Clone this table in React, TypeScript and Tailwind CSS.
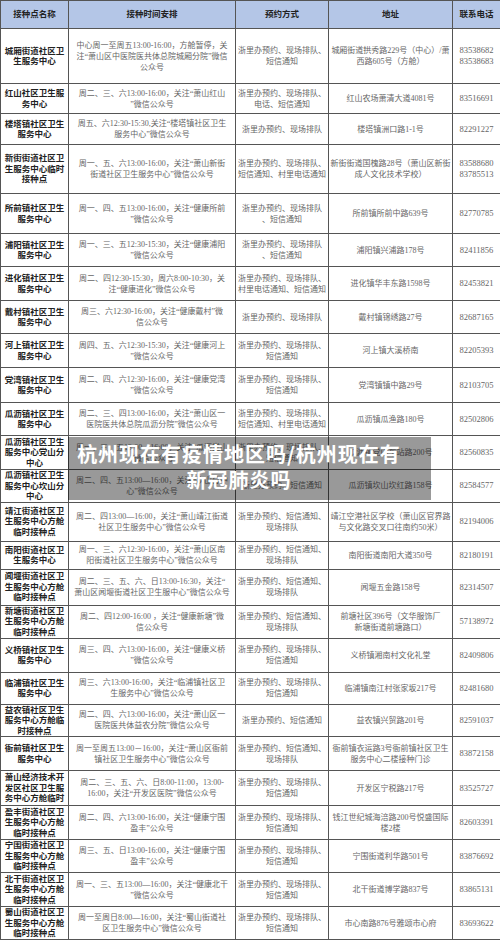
import React from 'react';

type Row = {
  h: string;
  name: string[];
  time: string[];
  method: string[];
  addr: string[];
  phone: string[];
};

const rows: Row[] = [
  {
    h: 'h-[55px]',
    name: ['城厢街道社区卫', '生服务中心'],
    time: ['中心周一至周五13:00-16:00，方舱暂停，关', '注“萧山区中医院医共体总院城厢分院”微信', '公众号'],
    method: ['浙里办预约、现场排队、', '短信通知'],
    addr: ['城厢街道拱秀路229号（中心）/萧', '西路605号（方舱）'],
    phone: ['83538682', '83538683'],
  },
  {
    h: 'h-[30px]',
    name: ['红山社区卫生服', '务中心'],
    time: ['周二、三、六13:00-16:00，关注“萧山红山', '”微信公众号'],
    method: ['浙里办预约、现场排队、', '电话、短信通知'],
    addr: ['红山农场萧清大道4081号'],
    phone: ['83516691'],
  },
  {
    h: 'h-[31px]',
    name: ['楼塔镇社区卫生', '服务中心'],
    time: ['周五、六12:30-15:30,关注“楼塔镇社区卫生', '服务中心”微信公众号'],
    method: ['浙里办预约、现场排队'],
    addr: ['楼塔镇洲口路1-1号'],
    phone: ['82291227'],
  },
  {
    h: 'h-[49px]',
    name: ['新街街道社区卫', '生服务中心临时', '接种点'],
    time: ['周一、五、六13:00-16:00，关注“萧山新街', '街道社区卫生服务中心”微信公众号'],
    method: ['浙里办预约、现场排队、', '短信通知、村里电话通知'],
    addr: ['新街街道国槐路28号（萧山区新街', '成人文化技术学校）'],
    phone: ['83588680', '83785513'],
  },
  {
    h: 'h-[40px]',
    name: ['所前镇社区卫生', '服务中心'],
    time: ['周一、四、五13:00-16:00，关注“健康所前', '”微信公众号'],
    method: ['浙里办预约、现场排队', '、短信通知'],
    addr: ['所前镇所前中路639号'],
    phone: ['82770785'],
  },
  {
    h: 'h-[33px]',
    name: ['浦阳镇社区卫生', '服务中心'],
    time: ['周一、三、五12:30-15:30，关注“健康浦阳', '”微信公众号'],
    method: ['浙里办预约、现场排队', '、短信通知'],
    addr: ['浦阳镇兴浦路178号'],
    phone: ['82411856'],
  },
  {
    h: 'h-[34px]',
    name: ['进化镇社区卫生', '服务中心'],
    time: ['周二、四12:30-15:30，周六8:00-10:30，关', '注“健康进化”微信公众号'],
    method: ['浙里办预约、现场排队、', '村里电话通知、短信通知'],
    addr: ['进化镇华丰东路1598号'],
    phone: ['82453821'],
  },
  {
    h: 'h-[33px]',
    name: ['戴村镇社区卫生', '服务中心'],
    time: ['周三、六12:30-16:00，关注“健康戴村”微', '信公众号'],
    method: ['浙里办预约、现场排队'],
    addr: ['戴村镇锦绣路27号'],
    phone: ['82687165'],
  },
  {
    h: 'h-[34px]',
    name: ['河上镇社区卫生', '服务中心'],
    time: ['周四、五、六12:30-15:30，关注“健康河上', '”微信公众号'],
    method: ['浙里办预约、现场排队、', '短信通知'],
    addr: ['河上镇大溪桥南'],
    phone: ['82205393'],
  },
  {
    h: 'h-[35px]',
    name: ['党湾镇社区卫生', '服务中心'],
    time: ['周二、四、六12:30-16:00，关注“健康党湾', '”微信公众号'],
    method: ['浙里办预约、现场排队、', '短信通知'],
    addr: ['党湾镇镇中路29号'],
    phone: ['82103705'],
  },
  {
    h: 'h-[33px]',
    name: ['瓜沥镇社区卫生', '服务中心'],
    time: ['周二、三、四13:00-16:00，关注“萧山区一', '医院医共体总院瓜沥分院”微信公众号'],
    method: ['浙里办预约、现场排队、', '短信通知、村里电话通知'],
    addr: ['瓜沥镇瓜渔路180号'],
    phone: ['82502806'],
  },
  {
    h: 'h-[34px]',
    name: ['瓜沥镇社区卫生', '服务中心党山分', '中心'],
    time: ['周一、三、五13:00—16:00，关注“瓜沥党山', '”微信公众号'],
    method: ['浙里办预约、现场排队、', '短信通知'],
    addr: ['瓜沥镇党山车站路200号'],
    phone: ['82560835'],
  },
  {
    h: 'h-[32px]',
    name: ['瓜沥镇社区卫生', '服务中心坎山分', '中心'],
    time: ['周二、四、五13:00—16:00，关注“坎山分中', '心”微信公众号'],
    method: ['浙里办预约、短信通知'],
    addr: ['瓜沥镇坎山坎红路158号'],
    phone: ['82584577'],
  },
  {
    h: 'h-[39px]',
    name: ['靖江街道社区卫', '生服务中心方舱', '临时接种点'],
    time: ['周二、四13:00—16:00，关注“萧山靖江街道', '社区卫生服务中心”微信公众号'],
    method: ['浙里办预约、短信通知、', '现场排队'],
    addr: ['靖江空港社区学校（萧山区官界路', '与文化路交叉口往南约50米）'],
    phone: ['82194006'],
  },
  {
    h: 'h-[28px]',
    name: ['南阳街道社区卫', '生服务中心'],
    time: ['周一、三、六12:30-16:00，关注“萧山区南', '阳街道社区卫生服务中心”微信公众号'],
    method: ['浙里办预约、短信通知、', '现场排队'],
    addr: ['南阳街道南阳大道350号'],
    phone: ['82180191'],
  },
  {
    h: 'h-[36px]',
    name: ['闻堰街道社区卫', '生服务中心方舱', '临时接种点'],
    time: ['周二、三、五、六、日13:00-16:30，关注“', '萧山区闻堰街道社区卫生服中心”微信公众号'],
    method: ['浙里办预约、短信通知、', '现场排队'],
    addr: ['闻堰五金路158号'],
    phone: ['82314507'],
  },
  {
    h: 'h-[33px]',
    name: ['新塘街道社区卫', '生服务中心方舱', '临时接种点'],
    time: ['周二、四12:00-16:00 ，关注“健康新塘”微', '信公众号'],
    method: ['浙里办预约、短信通知、', '现场排队'],
    addr: ['前塘社区396号（文华服饰厂', '新塘街道前塘路口）'],
    phone: ['57138972'],
  },
  {
    h: 'h-[34px]',
    name: ['义桥镇社区卫生', '服务中心'],
    time: ['周三、四、六13:00-16:00，关注“健康义桥', '”微信公众号'],
    method: ['浙里办预约、现场排队、', '短信通知'],
    addr: ['义桥镇湘南村文化礼堂'],
    phone: ['82409806'],
  },
  {
    h: 'h-[32px]',
    name: ['临浦镇社区卫生', '服务中心'],
    time: ['周三、六13:00-16:00，关注“临浦镇社区卫', '生服务中心”微信公众号'],
    method: ['浙里办预约、现场排队、', '短信通知'],
    addr: ['临浦镇南江村张家坂217号'],
    phone: ['82481680'],
  },
  {
    h: 'h-[32px]',
    name: ['益农镇社区卫生', '服务中心方舱临', '时接种点'],
    time: ['周二、四、六13:00-16:00，关注“萧山区一', '医院医共体益农分院”微信公众号'],
    method: ['浙里办预约、短信通知'],
    addr: ['益农镇兴贸路201号'],
    phone: ['82591037'],
  },
  {
    h: 'h-[34px]',
    name: ['衙前镇社区卫生', '服务中心'],
    time: ['周一至周五13:00－16:00，关注“萧山区衙前', '镇社区卫生服务中心”微信公众号'],
    method: ['浙里办预约、短信通知、', '现场排队'],
    addr: ['衙前镇衣运路3号衙前镇社区卫生', '服务中心二楼接种门诊'],
    phone: ['83872158'],
  },
  {
    h: 'h-[35px]',
    name: ['萧山经济技术开', '发区社区卫生服', '务中心方舱临时'],
    time: ['周二、三、五、六、日8:00-11:00，13:00-', '16:00，关注“开发区医院”微信公众号'],
    method: ['浙里办预约、现场排队、', '短信通知'],
    addr: ['开发区宁税路217号'],
    phone: ['83525727'],
  },
  {
    h: 'h-[34px]',
    name: ['盈丰街道社区卫', '生服务中心方舱', '临时接种点'],
    time: ['周二、四、六13:00-16:00，关注“健康宁围', '盈丰”公众号'],
    method: ['浙里办预约、现场排队、', '短信通知'],
    addr: ['钱江世纪城海涪路200号悦盛国际', '楼2楼'],
    phone: ['82603391'],
  },
  {
    h: 'h-[33px]',
    name: ['宁围街道社区卫', '生服务中心方舱', '临时接种点'],
    time: ['周三、五、日13:00-16:00，关注“健康宁围', '盈丰”公众号'],
    method: ['浙里办预约、现场排队、', '短信通知'],
    addr: ['宁围街道利华路501号'],
    phone: ['83876692'],
  },
  {
    h: 'h-[34px]',
    name: ['北干街道社区卫', '生服务中心方舱', '临时接种点'],
    time: ['周一、三、五13:00—16:00，关注“健康北干', '”微信公众号'],
    method: ['浙里办预约、现场排队、', '短信通知'],
    addr: ['北干街道博学路837号'],
    phone: ['83865131'],
  },
  {
    h: 'h-[33px]',
    name: ['蜀山街道社区卫', '生服务中心方舱', '临时接种点'],
    time: ['周一至周日8:00—16:00，关注“蜀山街道社', '区卫生服务中心”微信公众号'],
    method: ['浙里办预约、现场排队、', '短信通知'],
    addr: ['市心南路876号雅颂市心府'],
    phone: ['83693622'],
  },
];

const Lines = ({ lines }: { lines: string[] }) => (
  <>
    {lines.map((l, i) => (
      <div key={i} className="whitespace-nowrap">
        {l}
      </div>
    ))}
  </>
);

const td = 'border border-[#555] p-0 text-center align-middle';

export default function App() {
  return (
    <div className="relative w-[500px] h-[940px] overflow-hidden bg-white font-['Liberation_Serif','Noto_Sans_CJK_SC',serif]">
      <table className="w-[500px] table-fixed border-collapse">
        <colgroup>
          <col className="w-[68px]" />
          <col className="w-[167px]" />
          <col className="w-[93px]" />
          <col className="w-[124px]" />
          <col className="w-[48px]" />
        </colgroup>
        <thead>
          <tr className="h-[28px] bg-[#b4c6e7] text-[8.5px] font-bold text-[#222]">
            <th className={td}>接种点名称</th>
            <th className={td}>接种时间安排</th>
            <th className={td}>预约方式</th>
            <th className={td}>地址</th>
            <th className={td}>联系电话</th>
          </tr>
        </thead>
        <tbody>
          {rows.map((r, i) => (
            <tr key={i} className={r.h}>
              <td className={`${td} text-[8.5px] leading-[10.5px] font-bold text-[#222]`}>
                <Lines lines={r.name} />
              </td>
              <td className={`${td} text-[8px] leading-[11px] text-[#666]`}>
                <Lines lines={r.time} />
              </td>
              <td className={`${td} text-[8px] leading-[11px] text-[#666]`}>
                <Lines lines={r.method} />
              </td>
              <td className={`${td} text-[8px] leading-[11px] text-[#666]`}>
                <Lines lines={r.addr} />
              </td>
              <td className={`${td} text-[8.5px] leading-[11px] text-[#666]`}>
                <Lines lines={r.phone} />
              </td>
            </tr>
          ))}
        </tbody>
      </table>

      {/* title overlay */}
      <div className="absolute left-[68px] top-[437px] w-[363px] h-[63px] bg-black/40">
        <div className="w-[342px] pt-[4px] text-center font-['Noto_Sans_CJK_SC',sans-serif] text-[20px] leading-[26px] font-bold tracking-[1px] text-white">
          <div className="whitespace-nowrap">杭州现在有疫情地区吗/杭州现在有</div>
          <div className="whitespace-nowrap">新冠肺炎吗</div>
        </div>
      </div>
    </div>
  );
}
